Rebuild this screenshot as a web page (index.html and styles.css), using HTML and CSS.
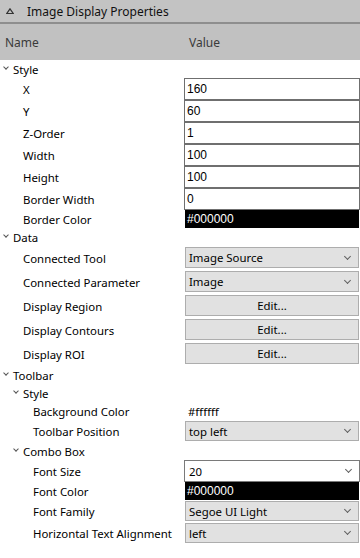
FILE: index.html
```html
<!DOCTYPE html>
<html lang="en">
<head>
    <meta charset="UTF-8">
    <title>Image Display Properties</title>
    <link rel="stylesheet" href="styles.css">
</head>
<body>
<div class="panel">
    <!--标题-->
    <div class="title">
        <svg class="title-icon" width="8" height="6" viewBox="0 0 8 6">
            <path d="M4 0.8 L7.2 5.5 L0.8 5.5 Z" fill="none" stroke="#333" stroke-width="1.2"/>
        </svg>
        <span>Image Display Properties</span>
    </div>
    <!--表头-->
    <div class="head">
        <span class="head-name">Name</span>
        <span class="head-value">Value</span>
    </div>

    <div class="grid">
        <!--Style-->
        <div class="row group"><span class="name l0"><i class="fold"></i>Style</span></div>
        <div class="row field"><span class="name l1">X</span><span class="value"><span class="box">160</span></span></div>
        <div class="row field"><span class="name l1">Y</span><span class="value"><span class="box">60</span></span></div>
        <div class="row field"><span class="name l1">Z-Order</span><span class="value"><span class="box">1</span></span></div>
        <div class="row field"><span class="name l1">Width</span><span class="value"><span class="box">100</span></span></div>
        <div class="row field"><span class="name l1">Height</span><span class="value"><span class="box">100</span></span></div>
        <div class="row field"><span class="name l1">Border Width</span><span class="value"><span class="box">0</span></span></div>
        <div class="row color"><span class="name l1">Border Color</span><span class="value"><span class="swatch">#000000</span></span></div>

        <!--Data-->
        <div class="row group"><span class="name l0"><i class="fold"></i>Data</span></div>
        <div class="row control"><span class="name l1">Connected Tool</span><span class="value"><span class="combo">Image Source<i class="arrow"></i></span></span></div>
        <div class="row control"><span class="name l1">Connected Parameter</span><span class="value"><span class="combo">Image<i class="arrow"></i></span></span></div>
        <div class="row control"><span class="name l1">Display Region</span><span class="value"><span class="button">Edit...</span></span></div>
        <div class="row control"><span class="name l1">Display Contours</span><span class="value"><span class="button">Edit...</span></span></div>
        <div class="row control"><span class="name l1">Display ROI</span><span class="value"><span class="button">Edit...</span></span></div>

        <!--Toolbar-->
        <div class="row group"><span class="name l0"><i class="fold"></i>Toolbar</span></div>
        <div class="row group"><span class="name l1 sub"><i class="fold"></i>Style</span></div>
        <div class="row text"><span class="name l2">Background Color</span><span class="value plain">#ffffff</span></div>
        <div class="row combo-row"><span class="name l2">Toolbar Position</span><span class="value"><span class="combo">top left<i class="arrow"></i></span></span></div>
        <div class="row group"><span class="name l1 sub"><i class="fold"></i>Combo Box</span></div>
        <div class="row field"><span class="name l2">Font Size</span><span class="value"><span class="box edit">20<i class="arrow"></i></span></span></div>
        <div class="row color"><span class="name l2">Font Color</span><span class="value"><span class="swatch">#000000</span></span></div>
        <div class="row combo-row"><span class="name l2">Font Family</span><span class="value"><span class="combo">Segoe UI Light<i class="arrow"></i></span></span></div>
        <div class="row combo-row"><span class="name l2">Horizontal Text Alignment</span><span class="value"><span class="combo">left<i class="arrow"></i></span></span></div>
    </div>
</div>
</body>
</html>
```

FILE: styles.css
```css
* {
    padding: 0;
    margin: 0;
    box-sizing: border-box;
}

body {
    width: 360px;
    height: 558px;
    background: #fff;
    font-family: "Noto Sans", "Open Sans", sans-serif;
    font-size: 11.4px;
    color: #000;
    overflow: hidden;
}

.panel {
    width: 360px;
}

/* 标题栏 */
.title {
    height: 24px;
    background: #c3c3c3;
    border-bottom: 2px solid #8e8e8e;
    display: flex;
    align-items: center;
    padding-left: 6px;
    gap: 13px;
    color: #111;
    font-size: 12px;
}

.title-icon {
    display: block;
}

/* 表头 */
.head {
    height: 36px;
    background: #c1c1c1;
    display: grid;
    grid-template-columns: 184px 1fr;
    align-items: center;
    color: #3a3a3a;
    padding-top: 1px;
    font-size: 12px;
}

.head-name {
    padding-left: 5px;
}

.head-value {
    padding-left: 5px;
}

/* 属性行 */
.row {
    display: grid;
    grid-template-columns: 184px 176px;
    align-items: center;
}

.row.group,
.row.text {
    height: 18px;
}

.row.field {
    height: 22px;
}

.row.color {
    height: 18px;
}

.row.control {
    height: 24px;
}

.row.combo-row {
    height: 22px;
}

.name {
    display: flex;
    align-items: center;
    white-space: nowrap;
}

.l0 {
    padding-left: 3px;
}

.l1 {
    padding-left: 23px;
}

.l1.sub {
    padding-left: 13px;
}

.l2 {
    padding-left: 33px;
}

.fold {
    width: 10px;
    height: 6px;
    display: inline-block;
    position: relative;
}

.fold::before {
    content: "";
    position: absolute;
    left: 1px;
    top: -1px;
    width: 3px;
    height: 3px;
    border-right: 1px solid #555;
    border-bottom: 1px solid #555;
    transform: rotate(45deg);
}

.value {
    height: 100%;
    display: flex;
    align-items: stretch;
}

.value.plain {
    align-items: center;
    padding-left: 4px;
}

/* 文本框 */
.box {
    flex: 1;
    border: 1px solid #6f6f6f;
    background: #fff;
    font-family: "Liberation Sans", Arial, sans-serif;
    font-size: 12px;
    display: flex;
    align-items: center;
    padding-left: 2px;
    position: relative;
}

.box.edit {
    font-family: "Noto Sans", sans-serif;
    font-size: 11.4px;
    border-color: #7a7a7a;
    padding-left: 4px;
}

.swatch {
    flex: 1;
    margin-left: 1px;
    margin-right: 1px;
    background: #000;
    color: #fff;
    font-family: "Liberation Sans", Arial, sans-serif;
    font-size: 12px;
    display: flex;
    align-items: center;
    padding-left: 2px;
}

/* 下拉框 */
.combo {
    flex: 1;
    margin: 1px 1px 1px 1px;
    background: #e1e1e1;
    border: 1px solid #adadad;
    display: flex;
    align-items: center;
    padding-left: 3px;
    position: relative;
}

.row.control .combo {
    margin: 1px 1px 2px 1px;
}

.arrow {
    position: absolute;
    right: 8px;
    top: 50%;
    width: 5px;
    height: 5px;
    margin-top: -4px;
    border-right: 1px solid #606060;
    border-bottom: 1px solid #606060;
    transform: rotate(45deg);
}

/* 按钮 */
.button {
    flex: 1;
    margin: 1px 1px 2px 1px;
    background: #e1e1e1;
    border: 1px solid #adadad;
    display: flex;
    align-items: center;
    justify-content: center;
}
```
